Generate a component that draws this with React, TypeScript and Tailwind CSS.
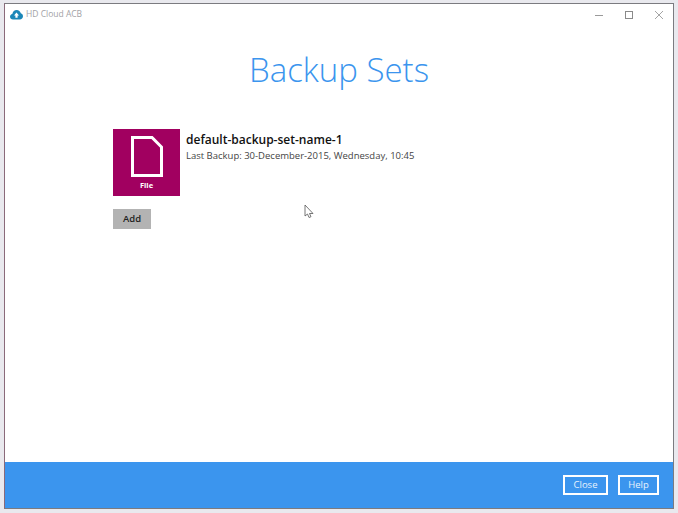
import React from "react";

export default function App() {
  return (
    <div className="w-[678px] h-[513px] bg-[#e9e9ee] pl-[4px] pr-[4px] pt-[3px] pb-[4px] overflow-hidden" style={{ fontFamily: '"Open Sans", sans-serif' }}>
      <div className="relative w-full h-full flex flex-col bg-white border border-[#7b7b80] border-l-[#8a6a7a]">
        <div className="h-[21px] flex items-center pl-[5px] shrink-0">
          <svg width="13" height="11" viewBox="0 0 13 11" className="mr-[3px]">
            <path d="M3 10.5C1.3 10.5 0 9.3 0 7.8 0 6.4 1 5.3 2.3 5.1 2.6 2.6 4.5 1 6.7 1 8.7 1 10.3 2.3 10.8 4.2 12.1 4.6 13 5.8 13 7.2 13 9 11.6 10.5 9.8 10.5Z" fill="#1b87b8" />
            <path d="M6.5 3.6 9 6.4H7.6V8.8H5.4V6.4H4Z" fill="#fff" />
          </svg>
          <span className="text-[8.5px] leading-none text-[#a2a2a6]">HD Cloud ACB</span>
          <div className="ml-auto flex items-center text-[#8c8c8c] pr-[9px] gap-[20px]">
            <svg width="10" height="10" viewBox="0 0 10 10"><path d="M1 5.5H9" stroke="#9a9a9a" strokeWidth="1" /></svg>
            <svg width="10" height="10" viewBox="0 0 10 10"><rect x="1.5" y="1.5" width="7" height="7" fill="none" stroke="#8a8a8a" strokeWidth="1" /></svg>
            <svg width="10" height="10" viewBox="0 0 10 10"><path d="M1 1L9 9M9 1L1 9" stroke="#9a9a9a" strokeWidth="0.9" /></svg>
          </div>
        </div>

        <div className="flex-1 flex flex-col">
          <h1 className="text-center text-[33px] leading-[44px] font-light text-[#3b95ee] mt-[23px]">Backup Sets</h1>
          <div className="flex pl-[108px] mt-[37px]">
            <div className="w-[67px] h-[67px] bg-[#a10060] flex flex-col items-center pt-[7px]">
              <svg width="32" height="41" viewBox="0 0 32 41">
                <path d="M1.5 1.5H21L30.5 11V39.5H1.5Z" fill="none" stroke="#fff" strokeWidth="3" />
                <path d="M20.5 1.5V11.5H30.5" fill="none" stroke="#fff" strokeWidth="0" />
              </svg>
              <span className="text-[7.5px] leading-[10px] font-bold text-white mt-[3px]">File</span>
            </div>
            <div className="ml-[6px] flex flex-col">
              <span className="text-[12px] leading-[16px] font-semibold text-[#111] mt-[3px]">default-backup-set-name-1</span>
              <span className="text-[9.5px] leading-[14px] text-[#444] mt-[1px]">Last Backup: 30-December-2015, Wednesday, 10:45</span>
            </div>
          </div>
          <div className="pl-[108px] mt-[13px]">
            <button className="w-[38px] h-[20px] bg-[#b3b3b3] text-[9.5px] font-semibold text-[#222] flex items-center justify-center">Add</button>
          </div>
        </div>

        <div className="h-[46px] bg-[#3b95ee] flex items-center justify-end pr-[14px] gap-[10px] shrink-0">
          <button className="w-[45px] h-[20px] border-2 border-white text-[9.5px] text-[#e8f2fd] flex items-center justify-center">Close</button>
          <button className="w-[41px] h-[20px] border-2 border-white text-[9.5px] text-[#e8f2fd] flex items-center justify-center">Help</button>
        </div>

        <svg width="12" height="16" viewBox="0 0 12 16" className="absolute left-[299px] top-[200px]">
          <path d="M1 1V12L3.5 10L5 13.5L7 12.7L5.5 9.5H9Z" fill="#fff" stroke="#555" strokeWidth="0.8" />
        </svg>
      </div>
    </div>
  );
}
